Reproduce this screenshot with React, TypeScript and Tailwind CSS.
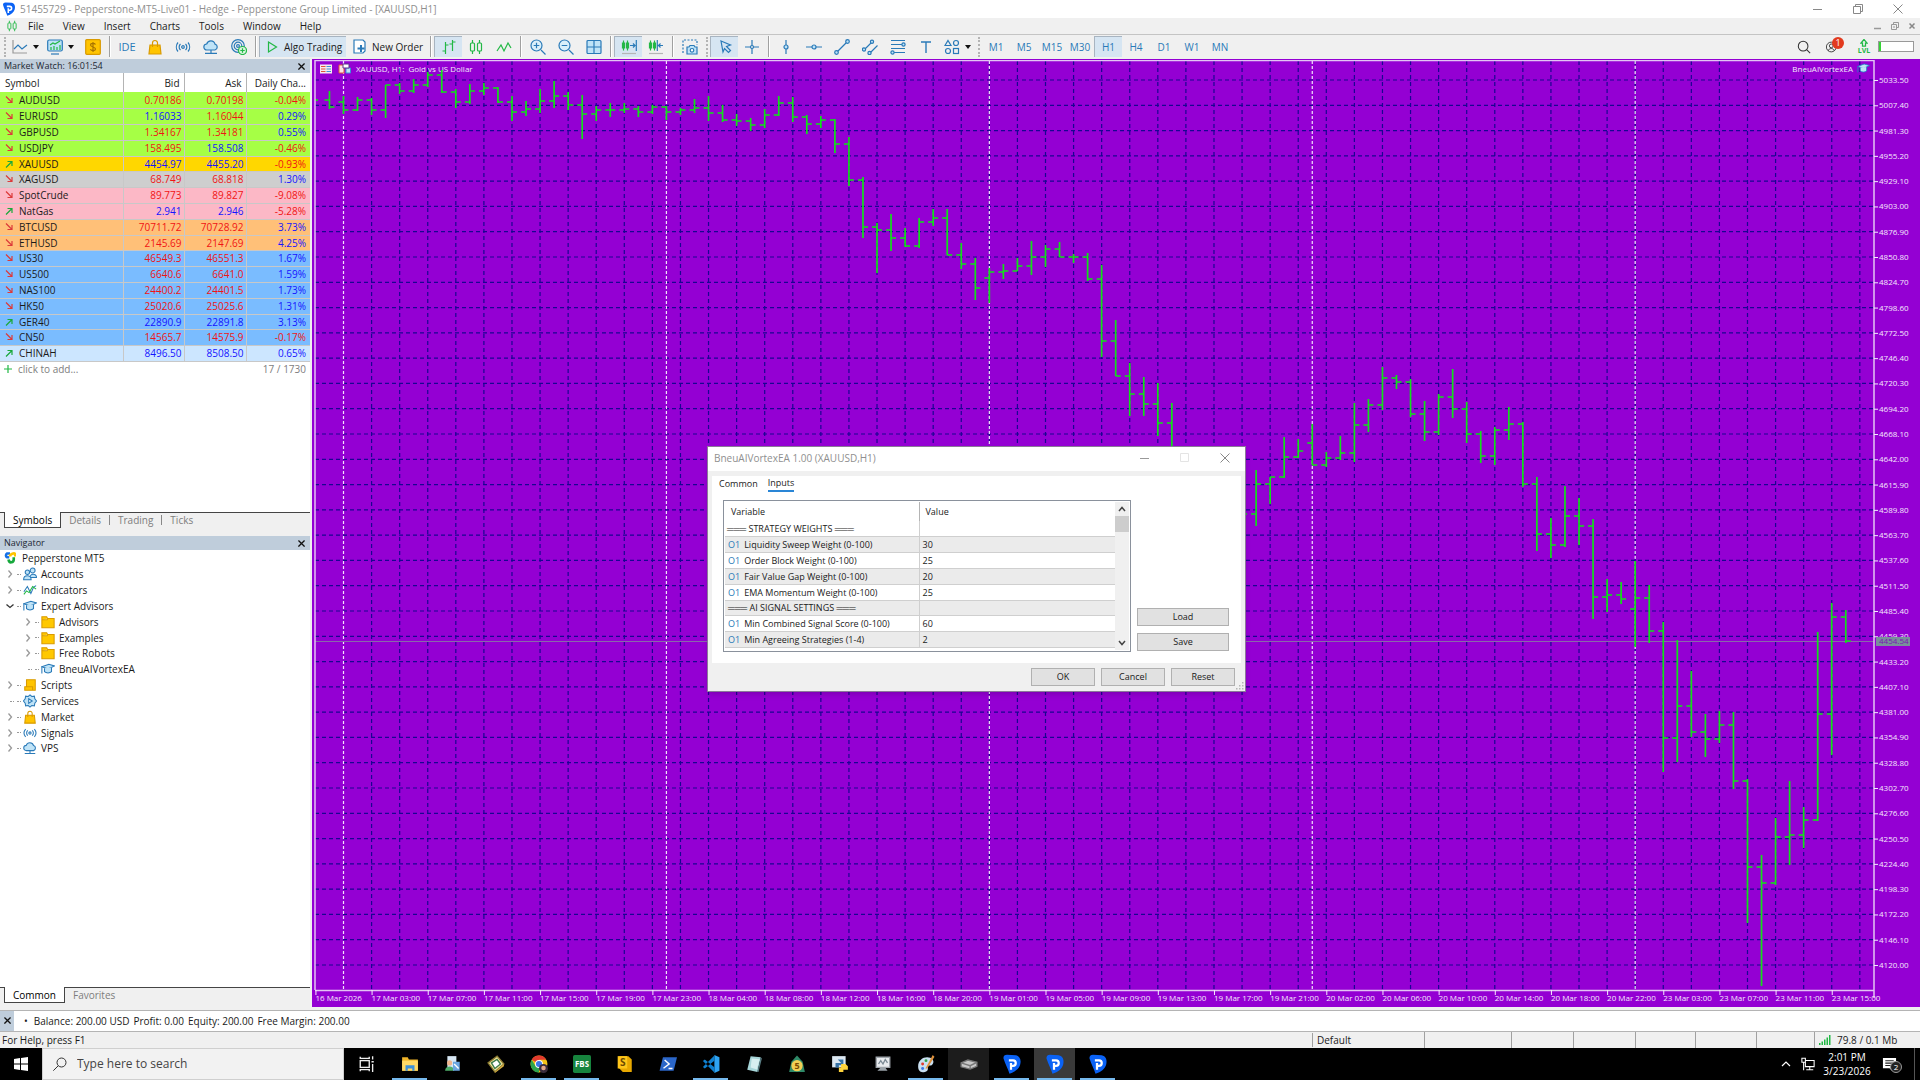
import { ReactNode } from 'react';

interface quoteProps {
    symbol: string;
    up: boolean;
    bid: string;
    ask: string;
    change: string;
    bidUp: boolean;
    askUp: boolean;
    color: string;
}

interface childrenProps {
    children?: ReactNode;
}

const BLUE = '#2a7ab8';
const SKY = '#bfe3f7';
const GREEN = '#22b845';

const GREEN_ROW = 'bg-[#a6ff45]';
const PINK_ROW = 'bg-[#fcb8c6]';
const ORANGE_ROW = 'bg-[#ffc078]';
const BLUE_ROW = 'bg-[#7abcff]';

const quotes: quoteProps[] = [
    { symbol: 'AUDUSD', up: false, bid: '0.70186', ask: '0.70198', change: '-0.04%', bidUp: false, askUp: false, color: GREEN_ROW },
    { symbol: 'EURUSD', up: false, bid: '1.16033', ask: '1.16044', change: '0.29%', bidUp: true, askUp: false, color: GREEN_ROW },
    { symbol: 'GBPUSD', up: false, bid: '1.34167', ask: '1.34181', change: '0.55%', bidUp: false, askUp: false, color: GREEN_ROW },
    { symbol: 'USDJPY', up: false, bid: '158.495', ask: '158.508', change: '-0.46%', bidUp: false, askUp: true, color: GREEN_ROW },
    { symbol: 'XAUUSD', up: true, bid: '4454.97', ask: '4455.20', change: '-0.93%', bidUp: true, askUp: true, color: 'bg-[#ffd700]' },
    { symbol: 'XAGUSD', up: false, bid: '68.749', ask: '68.818', change: '1.30%', bidUp: false, askUp: false, color: 'bg-[#cecece]' },
    { symbol: 'SpotCrude', up: false, bid: '89.773', ask: '89.827', change: '-9.08%', bidUp: false, askUp: false, color: PINK_ROW },
    { symbol: 'NatGas', up: true, bid: '2.941', ask: '2.946', change: '-5.28%', bidUp: true, askUp: true, color: PINK_ROW },
    { symbol: 'BTCUSD', up: false, bid: '70711.72', ask: '70728.92', change: '3.73%', bidUp: false, askUp: false, color: ORANGE_ROW },
    { symbol: 'ETHUSD', up: false, bid: '2145.69', ask: '2147.69', change: '4.25%', bidUp: false, askUp: false, color: ORANGE_ROW },
    { symbol: 'US30', up: false, bid: '46549.3', ask: '46551.3', change: '1.67%', bidUp: false, askUp: false, color: BLUE_ROW },
    { symbol: 'US500', up: false, bid: '6640.6', ask: '6641.0', change: '1.59%', bidUp: false, askUp: false, color: BLUE_ROW },
    { symbol: 'NAS100', up: false, bid: '24400.2', ask: '24401.5', change: '1.73%', bidUp: false, askUp: false, color: BLUE_ROW },
    { symbol: 'HK50', up: false, bid: '25020.6', ask: '25025.6', change: '1.31%', bidUp: false, askUp: false, color: BLUE_ROW },
    { symbol: 'GER40', up: true, bid: '22890.9', ask: '22891.8', change: '3.13%', bidUp: true, askUp: true, color: BLUE_ROW },
    { symbol: 'CN50', up: false, bid: '14565.7', ask: '14575.9', change: '-0.17%', bidUp: false, askUp: false, color: BLUE_ROW },
    { symbol: 'CHINAH', up: true, bid: '8496.50', ask: '8508.50', change: '0.65%', bidUp: true, askUp: true, color: 'bg-[#cce6ff]' },
];

// high, low, close and, where the bar opens on a gap, open
const bars: number[][] = [
    [31, 49, 47], [36, 54, 50, 42], [37, 51, 40], [38, 55, 50], [25, 58, 25], [23, 34, 31], [19, 33, 25], [12, 27, 15],
    [10, 33, 32], [29, 48, 42], [24, 44, 31], [23, 35, 28], [27, 43, 42], [36, 61, 52], [41, 56, 49], [29, 53, 41],
    [21, 48, 36], [32, 50, 45], [35, 79, 54], [46, 61, 50], [43, 57, 50], [43, 53, 49], [46, 57, 52], [45, 54, 47],
    [46, 60, 52], [48, 55, 50], [39, 53, 48], [36, 61, 53], [45, 62, 60], [54, 66, 61], [58, 71, 65], [49, 68, 55],
    [36, 56, 43], [37, 62, 57], [55, 74, 64], [56, 68, 60], [59, 93, 84], [77, 126, 120], [117, 178, 167], [163, 213, 170],
    [154, 191, 178], [168, 187, 186], [158, 188, 162], [149, 166, 158], [149, 195, 195], [183, 209, 204], [198, 240, 228], [208, 243, 212, 218],
    [204, 219, 211], [198, 211, 206], [181, 215, 197], [185, 207, 189], [182, 197, 197], [194, 203, 197], [193, 221, 219], [205, 297, 281],
    [260, 316, 316], [303, 356, 334], [317, 356, 344], [323, 376, 363], [343, 420, 410], [400, 450, 440], [430, 480, 470], [450, 490, 460],
    [450, 500, 480], [440, 490, 454], [410, 466, 424], [417, 444, 417], [377, 418, 397], [379, 398, 391], [364, 405, 405, 383], [392, 407, 398],
    [376, 400, 393], [343, 402, 365], [339, 372, 345], [307, 350, 318], [315, 329, 322], [319, 357, 354], [341, 381, 372], [334, 375, 337],
    [309, 358, 349], [342, 383, 374], [371, 403, 396], [367, 405, 370], [347, 380, 364], [362, 427, 424], [417, 491, 474], [458, 498, 485],
    [426, 487, 456], [438, 485, 466], [459, 559, 537], [519, 552, 535], [522, 544, 539], [501, 587, 538, 549], [525, 583, 571], [562, 712, 678],
    [580, 702, 646], [611, 677, 672], [654, 697, 679], [651, 683, 665], [652, 729, 721], [719, 863, 807], [795, 926, 823], [758, 825, 777],
    [721, 805, 775], [747, 788, 760], [572, 761, 654], [543, 695, 557], [550, 583, 581],
];

const days: [string, string[]][] = [
    ['17 Mar', ['03', '07', '11', '15', '19', '23']],
    ['18 Mar', ['04', '08', '12', '16', '20']],
    ['19 Mar', ['01', '05', '09', '13', '17', '21']],
    ['20 Mar', ['02', '06', '10', '14', '18', '22']],
    ['23 Mar', ['03', '07', '11', '15']],
];

const timeLabels = ['16 Mar 2026', ...days.flatMap(([day, hours]) => hours.map((hour) => `${day} ${hour}:00`))];

const inputs: [string, string][] = [
    ['Liquidity Sweep Weight (0-100)', '30'],
    ['Order Block Weight (0-100)', '25'],
    ['Fair Value Gap Weight (0-100)', '20'],
    ['EMA Momentum Weight (0-100)', '25'],
    ['═══ AI SIGNAL SETTINGS ═══', ''],
    ['Min Combined Signal Score (0-100)', '60'],
    ['Min Agreeing Strategies (1-4)', '2'],
];

function Icon({ children, size = 'size-4', box = '0 0 16 16' }: childrenProps & { size?: string; box?: string }) {
    return (
        <svg viewBox={box} className={`${size} shrink-0`} fill="none" stroke={BLUE} strokeWidth="1.2" aria-hidden="true">
            {children}
        </svg>
    );
}

function PepperLogo({ size }: { size: string }) {
    return (
        <Icon size={size}>
            <path d="M4 .6 11 .9C14 1.4 15.700 4.500 14.500 8.500 13.400 12 10.500 14.300 6 15.800 5 12 2.500 8 1.200 3.500 1 1.800 2 .6 4 .6Z" fill="#0a62f5" stroke="none" />
            <path d="M5.500 5H8.800a2.100 2.100 0 0 1 0 4.400H7M7.200 7.200V12.500" stroke="#fff" strokeWidth="1.800" />
        </Icon>
    );
}

function Cap() {
    return (
        <>
            <path d="M1 5.500 9 2.500l6.500 2L8 8Z" fill={SKY} />
            <path d="M4 7v4c2 2 6 2 8 0V6.200" fill={SKY} />
            <path d="M1 5.500V13" />
        </>
    );
}

function Cloud() {
    return (
        <>
            <path d="M4 11a3 3 0 0 1-.3-6A4.300 4.300 0 0 1 12 5.200 3 3 0 0 1 12 11Z" fill={SKY} />
            <path d="M8 11v3M2 14.300h12" />
        </>
    );
}

function Bag() {
    return (
        <>
            <path d="M3 6h10l1 9H2Z" fill="#ffc400" stroke="#d99a00" />
            <path d="M5.500 8V4a2.500 2.500 0 0 1 5 0v4" stroke="#d99a00" />
        </>
    );
}

function Waves() {
    return (
        <>
            <circle cx="8" cy="8" r="1.300" />
            <path d="M5.500 5a4 4 0 0 0 0 6M10.500 5a4 4 0 0 1 0 6M3 3.500a7 7 0 0 0 0 9M13 3.500a7 7 0 0 1 0 9" />
        </>
    );
}

function Candles() {
    return (
        <g stroke={GREEN}>
            <path d="M4.500 1v3M4.500 12v3M11.500 1v3M11.500 12v3" />
            <rect x="2.500" y="4" width="4" height="8" rx="1" />
            <rect x="9.500" y="4" width="4" height="8" rx="1" />
        </g>
    );
}

function Separator() {
    return <span className="mx-0.5 h-[21px] w-0.5 shrink-0 border-l border-[#a0a0a0] bg-white" />;
}

function Grip() {
    return <span className="mx-0.5 h-5 w-0.5 shrink-0 border-l-2 border-dotted border-[#b4b4b4]" />;
}

function Caret() {
    return (
        <span className="flex w-2 shrink-0 justify-center">
            <svg viewBox="0 0 6 4" className="h-1 w-1.5"><path d="M0 0h6L3 4Z" fill="#111" /></svg>
        </span>
    );
}

function Tool({ label, active, narrow, children }: childrenProps & { label: string; active?: boolean; narrow?: boolean }) {
    return (
        <button
            aria-label={label}
            className={`flex h-[21px] shrink-0 items-center justify-center ${narrow ? 'w-6' : 'w-7'} ${active ? 'border-t border-l border-[#a8b4c0] bg-[#d6e5f2]' : ''}`}
        >
            {children}
        </button>
    );
}

function Toolbar() {
    const frames = ['M1', 'M5', 'M15', 'M30', 'H1', 'H4', 'D1', 'W1', 'MN'];

    return (
        <div className="flex h-[23px] shrink-0 items-center overflow-hidden bg-[#f0f0f0] pl-0.5">
            <Grip />
            <Tool label="Chart type" narrow><Icon><path d="M1 1v13h14" stroke="#999" /><path d="m2 10 4-4 4 4 5-4" /></Icon></Tool>
            <Caret />
            <span className="w-[3px]" />
            <Tool label="Templates" narrow>
                <Icon><rect x=".7" y="1" width="14.600" height="11" rx="1.500" fill={SKY} /><path d="M4 15h8" /><path d="m3 6 3-2 2 1 5-3M4 11V8M7 11V7M10 11V8M13 11V6" stroke={GREEN} /></Icon>
            </Tool>
            <Caret />
            <span className="w-1" />
            <Tool label="Funds">
                <Icon><rect x=".7" y=".7" width="14.600" height="14.600" rx="1" fill="#ffc400" stroke="#d99a00" /><path d="M10.500 5.500c-1-1.500-5-1.500-5 .5s5 2 5 4-4 2.200-5.200.3M8 3v10" stroke="#a87400" /></Icon>
            </Tool>
            <Separator />
            <button className="w-7 shrink-0 text-[11px] text-[#2a7ab8]">IDE</button>
            <Tool label="Market"><Icon><Bag /></Icon></Tool>
            <Tool label="Signals"><Icon><Waves /></Icon></Tool>
            <Tool label="VPS"><Icon><Cloud /></Icon></Tool>
            <Tool label="Add account">
                <Icon><circle cx="7" cy="7" r="6.300" /><circle cx="7" cy="7" r="3.800" /><circle cx="7" cy="7" r="1.400" /><circle cx="11.500" cy="11.500" r="4" fill="#d9f5de" stroke={GREEN} /><path d="M11.500 9.300v4.400M9.300 11.500h4.400" stroke={GREEN} /></Icon>
            </Tool>
            <Separator />
            <button className="flex h-[21px] w-[87px] shrink-0 items-center gap-1 border-t border-l border-[#a8b4c0] bg-[#d6e5f2] pl-1 text-[10px] whitespace-nowrap">
                <Icon><path d="m4.500 3 8 5-8 5Z" stroke={GREEN} /></Icon>
                Algo Trading
            </button>
            <button className="flex h-[21px] w-[82px] shrink-0 items-center gap-1 pl-1.5 text-[10px] whitespace-nowrap">
                <Icon><path d="M2 1h9l2 2v9l-2 2H2Z" fill="#fff" /><path d="M9 6v7M5.500 9.500h7" strokeWidth="2" /></Icon>
                New Order
            </button>
            <Separator />
            <Tool label="Bar chart" active><Icon><path d="M4.500 3v12M1.500 12h3M4.500 6h3M11.500 1v11M8.500 5h3M11.500 3h3" stroke={GREEN} /></Icon></Tool>
            <Tool label="Candlesticks"><Icon><Candles /></Icon></Tool>
            <Tool label="Line chart"><Icon><path d="m1 12 4-6 3 6 4-8 3 5" stroke={GREEN} /></Icon></Tool>
            <Separator />
            <Tool label="Zoom in"><Icon><circle cx="6.500" cy="6.500" r="5.500" fill="#d9effa" /><path d="m11 11 4.500 4.500M6.500 3.700v5.600M3.700 6.500h5.600" /></Icon></Tool>
            <Tool label="Zoom out"><Icon><circle cx="6.500" cy="6.500" r="5.500" fill="#d9effa" /><path d="m11 11 4.500 4.500M3.700 6.500h5.600" /></Icon></Tool>
            <Tool label="Tile windows"><Icon><rect x="1" y="1.500" width="14" height="13" rx="1" fill={SKY} /><path d="M8 1.500v13M1 8h14" /></Icon></Tool>
            <Separator />
            <Tool label="Chart shift" active>
                <Icon><path d="M2.500 1.500v10M6.500 1.500v10" stroke={GREEN} /><path d="M1.500 4h2v5h-2ZM5.500 4h2v5h-2Z" stroke={GREEN} /><path d="M9 6.500h5M12 4.500l2 2-2 2M15.300 1v11" /><path d="M1 14.500h14" stroke="#b5b5b5" /></Icon>
            </Tool>
            <Tool label="Auto scroll">
                <Icon><path d="M2.500 1.500v10M6.500 1.500v10" stroke={GREEN} /><path d="M1.500 4h2v5h-2ZM5.500 4h2v5h-2Z" stroke={GREEN} /><path d="M10 6.500h5M12.500 4.500l-2 2 2 2M9.300 1v11" /><path d="M1 14.500h14" stroke="#b5b5b5" /></Icon>
            </Tool>
            <Separator />
            <Tool label="Screenshot"><Icon><path d="M1 14V1h14v5" strokeDasharray="2 1.500" /><path d="M5 8h2l1-1.500h4L13 8h2v7H5Z" fill={SKY} /><circle cx="10" cy="11.300" r="1.800" fill="#fff" /></Icon></Tool>
            <Grip />
            <Tool label="Cursor" active><Icon><path d="m4 2 9.500 4-4 1.500 4 4-2 2-4-4L6 13Z" /></Icon></Tool>
            <Tool label="Crosshair"><Icon><path d="M8 1v5.500M8 9.500V15M1 8h5.500M9.500 8H15" /><circle cx="8" cy="8" r="1.500" /></Icon></Tool>
            <Separator />
            <Tool label="Vertical line"><Icon><path d="M8 1v5M8 10v5" /><circle cx="8" cy="8" r="2" fill={SKY} /></Icon></Tool>
            <Tool label="Horizontal line"><Icon><path d="M0 8h6M10 8h6" /><circle cx="8" cy="8" r="2" fill={SKY} /></Icon></Tool>
            <Tool label="Trend line"><Icon><path d="m3 13 10-10" /><circle cx="2.500" cy="13.500" r="1.800" fill={SKY} /><circle cx="13.500" cy="2.500" r="1.800" fill={SKY} /></Icon></Tool>
            <Tool label="Channel"><Icon><path d="m2.500 10.500 7-7M7 15l8.500-8.500" /><circle cx="2" cy="10.500" r="1.600" fill={SKY} /><circle cx="10" cy="2.800" r="1.600" fill={SKY} /><circle cx="7.500" cy="14" r="1.600" fill={SKY} /></Icon></Tool>
            <Tool label="Fibonacci"><Icon><path d="M1 1.500h14M1 5.500h11M1 9.500h14M4 13.500h11" /><circle cx="13.500" cy="5.500" r="1.600" fill={SKY} /><circle cx="2.500" cy="13.500" r="1.600" fill={SKY} /></Icon></Tool>
            <Tool label="Text"><Icon><path d="M3 3h10M8 3v11" strokeWidth="1.400" /></Icon></Tool>
            <Tool label="Shapes" narrow><Icon><path d="M4 1.500 7 6.500H1Z" /><circle cx="12" cy="4" r="2.500" /><circle cx="4" cy="12" r="2.500" /><rect x="9.500" y="9.500" width="5" height="5" /></Icon></Tool>
            <Caret />
            <span className="w-1" />
            <Grip />
            {frames.map((frame) => (
                <button
                    key={frame}
                    className={`h-[21px] w-7 shrink-0 text-center text-[10px] text-[#2a7ab8] ${frame === 'H1' ? 'border-t border-l border-[#a8b4c0] bg-[#d6e5f2]' : ''}`}
                >
                    {frame}
                </button>
            ))}
            <div className="ml-auto flex shrink-0 items-center pr-1.5">
                <Tool label="Search"><Icon size="size-3.5"><circle cx="7" cy="7" r="5.500" stroke="#333" /><path d="m11 11 4 4" stroke="#333" /></Icon></Tool>
                <button className="relative flex w-7 justify-center" aria-label="Account">
                    <Icon size="size-3"><circle cx="7" cy="8" r="6.500" stroke="#333" /><circle cx="7" cy="6.500" r="2.500" stroke="#333" /><path d="M3 13c1-4 7-4 8 0" stroke="#333" /></Icon>
                    <span className="absolute -top-1 left-3.5 flex size-3 items-center justify-center rounded-full bg-[#e23a1e] text-[9px] text-white">1</span>
                </button>
                <button className="ml-1 flex w-7 flex-col items-center text-[7px] leading-[7px] font-bold text-[#22b845]">
                    <Icon size="size-2"><path d="M8 1 2 8h3v6h6V8h3Z" stroke={GREEN} strokeWidth="2.500" /></Icon>
                    LVL
                </button>
                <span className="h-[11px] w-9 border border-[#999] bg-white"><span className="block h-full w-0.5 bg-[#35d335]" /></span>
            </div>
        </div>
    );
}

function PanelTitle({ children }: childrenProps) {
    return (
        <div className="flex h-3.5 shrink-0 items-center justify-between bg-[#bfcddb] px-1 text-[9px] font-medium text-[#1c2733]">
            {children}
            <button className="pr-px" aria-label="Close panel">
                <svg viewBox="0 0 8 8" className="size-[7px]" stroke="#111" strokeWidth="1.500"><path d="m.5.5 7 7M7.500.5l-7 7" /></svg>
            </button>
        </div>
    );
}

function PanelTabs({ tabs }: { tabs: string[] }) {
    return (
        <div className="flex h-[18px] shrink-0 text-[10px] text-[#7d7d7d]">
            <span className="w-1 border-t border-[#444]" />
            <button className="h-4 border-x border-b border-[#444] bg-white px-2 leading-[14px] text-black">{tabs[0]}</button>
            <div className="flex flex-1 border-t border-[#444]">
                {tabs.slice(1).map((tab, index) => (
                    <button key={tab} className="flex h-3.5 items-center">
                        {index > 0 && <span className="h-2.5 border-l border-[#888]" />}
                        <span className="px-2">{tab}</span>
                    </button>
                ))}
            </div>
        </div>
    );
}

function MarketWatch() {
    return (
        <section className="flex h-[477px] shrink-0 flex-col">
            <PanelTitle>Market Watch: 16:01:54</PanelTitle>
            <div className="flex-1 bg-white">
                <table className="w-full table-fixed border-collapse text-[10px] leading-[14px]">
                    <thead>
                        <tr className="h-[19px]">
                            <th className="w-[123px] border-r border-[#b4b4b4] pl-[5px] text-left font-normal">Symbol</th>
                            <th className="w-[61px] border-r border-[#b4b4b4] pr-1 text-right font-normal">Bid</th>
                            <th className="w-[62px] border-r border-[#b4b4b4] pr-1 text-right font-normal">Ask</th>
                            <th className="pr-1 text-right font-normal whitespace-nowrap">Daily Cha...</th>
                        </tr>
                    </thead>
                    <tbody>
                        {quotes.map((quote) => (
                            <tr key={quote.symbol} className={`h-4 border-b border-[#c8c8c8] nth-[5n]:h-[15px] ${quote.color}`}>
                                <td className="border-r border-[#c8c8c8] p-0">
                                    <span className="flex items-center gap-1.5 pl-[5px]">
                                        <svg viewBox="0 0 8 8" className="size-2" fill="none" stroke={quote.up ? '#1ba83c' : '#dc3a3a'} strokeWidth="1.200">
                                            <path d={quote.up ? 'M1 7.500 7 1.500M2.500 1.500H7V6' : 'm1 .5 6 6M7 2v4.500H2.500'} />
                                        </svg>
                                        {quote.symbol}
                                    </span>
                                </td>
                                <td className={`border-r border-[#c8c8c8] py-0 pr-0.5 pl-0 text-right ${quote.bidUp ? 'text-[#1414ff]' : 'text-[#f01414]'}`}>{quote.bid}</td>
                                <td className={`border-r border-[#c8c8c8] py-0 pr-0.5 pl-0 text-right ${quote.askUp ? 'text-[#1414ff]' : 'text-[#f01414]'}`}>{quote.ask}</td>
                                <td className={`py-0 pr-1 pl-0 text-right ${quote.change.startsWith('-') ? 'text-[#f01414]' : 'text-[#1414ff]'}`}>{quote.change}</td>
                            </tr>
                        ))}
                    </tbody>
                </table>
                <div className="flex h-3.5 items-center gap-1.5 pr-1 pl-1 text-[10px] text-[#7d7d7d]">
                    <svg viewBox="0 0 8 8" className="size-2" stroke="#22b845" strokeWidth="1.200"><path d="M4 0v8M0 4h8" /></svg>
                    <span>click to add...</span>
                    <span className="ml-auto">17 / 1730</span>
                </div>
            </div>
            <PanelTabs tabs={['Symbols', 'Details', 'Trading', 'Ticks']} />
            <div className="h-1.5 bg-[#f0f0f0]" />
        </section>
    );
}

function TreeRow({ label, arrow, nested, children }: childrenProps & { label: string; arrow?: 'right' | 'down'; nested?: boolean }) {
    return (
        <li className={`flex h-4 items-center nth-[6n]:h-[15px] ${nested ? 'pl-6' : 'pl-1.5'}`}>
            <span className="flex w-2 justify-center">
                {arrow && (
                    <svg viewBox="0 0 8 8" className="size-2" fill="none" stroke={arrow === 'down' ? '#333' : '#999'} strokeWidth="1.300">
                        <path d={arrow === 'down' ? 'm.5 2.500 3.500 3 3.500-3' : 'm2.500.5 3 3.500-3 3.500'} />
                    </svg>
                )}
                {!arrow && <span className="ml-1 w-full border-t border-dotted border-[#999]" />}
            </span>
            <span className="mr-0.5 ml-[3px] w-1 border-t border-dotted border-[#999]" />
            <Icon size="size-3.5">{children}</Icon>
            <span className="pl-1">{label}</span>
        </li>
    );
}

function Folder() {
    return <path d="M1 14.500V2h5.500l1 2H15v10.500ZM1 5.500h6l1-1.500" fill="#ffc800" stroke="#d99a00" />;
}

function Navigator() {
    return (
        <section className="flex min-h-0 flex-1 flex-col">
            <PanelTitle>Navigator</PanelTitle>
            <ul className="flex-1 bg-white text-[10px]">
                <li className="flex h-4 items-center gap-1.5 pl-1">
                    <Icon size="size-3">
                        <path d="M8 2H4a3 3 0 0 0 0 5h3" stroke="#1470e6" strokeWidth="3.500" />
                        <path d="M8 6c0-4 6-5 7-3v3" stroke="#ffc400" strokeWidth="3.500" />
                        <path d="M6 10c1 6 7 4 7 0V7" stroke="#16a83c" strokeWidth="3.500" />
                    </Icon>
                    Pepperstone MT5
                </li>
                <TreeRow label="Accounts" arrow="right">
                    <circle cx="11" cy="4" r="2.800" fill={SKY} /><path d="M8 12c0-5 7-5 7.500 0Z" fill={SKY} /><circle cx="5" cy="6" r="2.500" fill={SKY} /><path d="M.7 14.500c0-6 8.600-6 8.600 0Z" fill={SKY} />
                </TreeRow>
                <TreeRow label="Indicators" arrow="right">
                    <path d="m1 10 4-6 4 8 3-7 3-2" /><path d="m1 13 3-4 3 2 4-7 4 3" stroke={GREEN} />
                </TreeRow>
                <TreeRow label="Expert Advisors" arrow="down"><Cap /></TreeRow>
                <TreeRow label="Advisors" arrow="right" nested><Folder /></TreeRow>
                <TreeRow label="Examples" arrow="right" nested><Folder /></TreeRow>
                <TreeRow label="Free Robots" arrow="right" nested><Folder /></TreeRow>
                <TreeRow label="BneuAIVortexEA" nested><Cap /></TreeRow>
                <TreeRow label="Scripts" arrow="right"><path d="M4 2h10v12H2v-4h2ZM4 10h7v4" fill="#ffc400" stroke="#d99a00" /></TreeRow>
                <TreeRow label="Services">
                    <path d="m8 1 2 1.800 3-.3.5 3L15.500 8l-2 2.500-.5 3-3-.3L8 15l-2-1.800-3 .3-.5-3L.5 8l2-2.500.5-3 3 .3Z" fill={SKY} /><path d="m6.500 5.500 4 2.500-4 2.500Z" fill="#fff" />
                </TreeRow>
                <TreeRow label="Market" arrow="right"><Bag /></TreeRow>
                <TreeRow label="Signals" arrow="right"><Waves /></TreeRow>
                <TreeRow label="VPS" arrow="right"><Cloud /></TreeRow>
            </ul>
            <PanelTabs tabs={['Common', 'Favorites']} />
            <div className="h-[5px] bg-[#f0f0f0]" />
        </section>
    );
}

function Chart() {
    const pitch = 14.04;
    const barX = (index: number) => 31.5 + (index - 1) * pitch;
    const levels = Array.from({ length: 36 }, (_, index) => index);
    const columns = Array.from({ length: 54 }, (_, index) => index);

    return (
        <svg viewBox="0 0 1608 947" preserveAspectRatio="xMinYMin slice" className="block size-full bg-[#9400d3]" fontSize="8">
            <g stroke="#1a0592" strokeWidth="1.200" strokeDasharray="4 3">
                {levels.map((level) => (
                    <line key={level} x1="3" x2="1562" y1={20 + level * 25.286} y2={20 + level * 25.286} />
                ))}
                {columns.map((column) => (
                    <line key={column} x1={barX(3 + column * 2)} x2={barX(3 + column * 2)} y1="1" y2="930" />
                ))}
            </g>
            <g stroke="#f3e3fb" strokeWidth="1.200" strokeDasharray="3 2">
                {[1, 24, 47, 70, 93].map((bar) => (
                    <line key={bar} x1={barX(bar)} x2={barX(bar)} y1="1" y2="930" />
                ))}
            </g>
            <line x1="3" x2="1562" y1="581.500" y2="581.500" stroke="#8a68aa" />
            <g fill="#f5e9fc">
                <text x="44" y="12" xmlSpace="preserve">XAUUSD, H1:  Gold vs US Dollar</text>
                <text x="1541" y="12" textAnchor="end">BneuAIVortexEA</text>
            </g>
            <g stroke="#12e01a" strokeWidth="1.700">
                <line x1="3" x2="6" y1="40" y2="40" />
                {bars.map(([high, low, close, open], index) => {
                    const x = barX(index);
                    const start = open ?? bars[index - 1]?.[2] ?? 40;
                    return <path key={index} d={`M${x} ${high}V${low}M${x - 5} ${start}H${x}M${x} ${close}H${x + 5}`} />;
                })}
            </g>
            <path d="M3 930V.5H1562V938M3 930.500H1562" fill="none" stroke="#e3c4f4" strokeWidth="1.500" />
            <g fill="#f5e9fc">
                {levels.map((level) => (
                    <g key={level}>
                        <rect x="1562" y={20 + level * 25.286} width="4" height="1" />
                        <text x="1567" y={23 + level * 25.286}>{(5033.5 - level * 26.1).toFixed(2)}</text>
                    </g>
                ))}
                {timeLabels.map((label, index) => (
                    <g key={label}>
                        <rect x={barX(index * 4 - 1)} y="930" width="1" height="5" />
                        <text x={barX(index * 4 - 1)} y="941">{label}</text>
                    </g>
                ))}
            </g>
            <rect x="1564" y="577" width="34" height="9" fill="#78909a" />
            <text x="1567" y="584" fill="#7b12b5">4454.54</text>
            <g>
                <rect x="8" y="4.500" width="12" height="9" fill="#f6e8ee" />
                <path d="M9 6.500h4.500M9 9h4.500M9 11.500h4.500" stroke="#e0503c" />
                <path d="M14.500 6.500H19M14.500 9H19M14.500 11.500H19" stroke="#3c90d8" />
                <path d="M27 5h5v8h-5Z" fill="#fbe3e3" stroke="#e0503c" />
                <path d="M34 8h4.500v5H34Z" fill="#bfe3f7" stroke="#3c90d8" />
                <path d="M31 4h6v4h-6Z" fill="#fff" stroke="#5b3a8c" />
            </g>
            <g transform="translate(1545 2) scale(.8)" fill="none" stroke="#1d86c4"><Cap /></g>
        </svg>
    );
}

function Dialog() {
    const button = 'h-[18px] border border-[#b0b0b0] bg-[#e1e1e1] text-center text-[9px] leading-4';

    return (
        <div role="dialog" aria-label="BneuAIVortexEA 1.00" className="absolute top-[387px] left-[395px] flex h-[246px] w-[539px] flex-col border border-[#8b7a99] bg-[#f0f0f0] shadow-md">
            <div className="flex h-6 shrink-0 items-center bg-white pr-[15px] pb-0.5 pl-1.5 text-[10px] text-[#8f8f8f]">
                <span className="flex-1">BneuAIVortexEA 1.00 (XAUUSD,H1)</span>
                <button className="w-10" aria-label="Minimize"><svg viewBox="0 0 10 10" className="size-2.5" stroke="#999"><path d="M0 5.500h9" /></svg></button>
                <button className="w-10" aria-label="Maximize"><svg viewBox="0 0 10 10" className="size-2.5" fill="none" stroke="#e4e4e4"><path d="M.5.5h8v8h-8Z" /></svg></button>
                <button aria-label="Close"><svg viewBox="0 0 10 10" className="size-2.5" stroke="#888"><path d="m.5.5 9 9M9.500.5l-9 9" /></svg></button>
            </div>
            <div className="mx-1 mt-[5px] flex min-h-0 flex-1 flex-col bg-white">
                <div className="flex h-6 shrink-0 gap-2.5 pl-[7px] text-[9px] leading-[14px]">
                    <button className="h-4">Common</button>
                    <button className="h-4 border-b-2 border-[#2a86d6]">Inputs</button>
                </div>
                <div className="flex flex-1 gap-1.5 pr-3 pb-3 pl-[11px]">
                    <div className="flex h-[152px] flex-1 overflow-hidden border border-[#8a919c] p-px">
                        <div className="h-full flex-1 overflow-hidden">
                            <table className="w-full table-fixed border-collapse text-[9px] leading-[13px]">
                                <thead>
                                    <tr className="h-[19px]">
                                        <th className="w-[194px] border-r border-[#b4b4b4] pl-1.5 text-left font-normal">Variable</th>
                                        <th className="pl-1.5 text-left font-normal">Value</th>
                                    </tr>
                                </thead>
                                <tbody>
                                    <tr className="h-[15px] border-b border-[#cfcfcf]">
                                        <td className="border-r border-[#cfcfcf] py-0 pl-0.5">═══ STRATEGY WEIGHTS ═══</td>
                                        <td />
                                    </tr>
                                    {inputs.map(([name, value]) => (
                                        <tr key={name} className="h-4 border-b border-[#cfcfcf] odd:bg-white even:bg-[#ebebeb] nth-[6]:h-[15px]">
                                            <td className="border-r border-[#cfcfcf] py-0 pr-0 pl-[3px] whitespace-nowrap">
                                                {value && <span className="mr-1 font-medium text-[#2a7ab8]">O1</span>}
                                                {name}
                                            </td>
                                            <td className="py-0 pr-0 pl-[3px]">{value}</td>
                                        </tr>
                                    ))}
                                </tbody>
                            </table>
                        </div>
                        <div className="flex w-3.5 shrink-0 flex-col items-center bg-[#f0f0f0] py-1">
                            <svg viewBox="0 0 8 6" className="h-1.5 w-2 shrink-0" fill="none" stroke="#444" strokeWidth="1.500"><path d="m1 5 3-3.500L7 5" /></svg>
                            <span className="mt-1 h-4 w-3.5 bg-[#cdcdcd]" />
                            <svg viewBox="0 0 8 6" className="mt-auto h-1.5 w-2 shrink-0" fill="none" stroke="#444" strokeWidth="1.500"><path d="m1 1 3 3.500L7 1" /></svg>
                        </div>
                    </div>
                    <div className="flex w-[92px] flex-col justify-end gap-[7px] pb-px">
                        <button className={button}>Load</button>
                        <button className={button}>Save</button>
                    </div>
                </div>
            </div>
            <div className="relative flex h-7 shrink-0 justify-end gap-1.5 pt-[5px] pr-2.5">
                <button className={`w-16 ${button}`}>OK</button>
                <button className={`w-16 ${button}`}>Cancel</button>
                <button className={`w-16 ${button}`}>Reset</button>
                <svg viewBox="0 0 8 8" className="absolute right-px bottom-px size-2" fill="#b5b5b5"><path d="M6 0h1.500v1.500H6ZM6 3h1.500v1.500H6ZM3 3h1.500v1.500H3ZM6 6h1.500v1.500H6ZM3 6h1.500v1.500H3ZM0 6h1.500v1.500H0Z" /></svg>
            </div>
        </div>
    );
}

interface appProps {
    name: string;
    open?: boolean;
    state?: string;
    icon: ReactNode;
}

const apps: appProps[] = [
    { name: 'Task view', icon: <g stroke="#eee"><rect x="2" y="5" width="8" height="6" /><path d="M2 1.500v1.500h8V1.500M2 14.500V13h8v1.500M13 1v3M13 8v7M12 6h2" /></g> },
    { name: 'File Explorer', open: true, icon: <g stroke="none"><path d="M1 2h5l1 2h8v10H1Z" fill="#f0b429" /><path d="M1 5h14v9H1Z" fill="#ffd966" /><path d="M4 9h8v5h-2v-2H6v2H4Z" fill="#3c90d8" /></g> },
    { name: 'Contacts', icon: <g stroke="none"><path d="M3 1h8v11H3Z" fill="#d8e8f5" /><circle cx="5" cy="7" r="2.300" fill="#f0b48c" /><path d="M1 14c0-5 8-5 8 0Z" fill="#4fae6a" /><path d="M8 6h6v8H8Z" fill="#6ba6e0" /><path d="m9 8 4 4" stroke="#fff" /></g> },
    { name: 'Notes', icon: <g><path d="m1 7 8-6 6 7-8 7Z" fill="#f2e6a0" stroke="#8a7a30" /><path d="m4 7 5-3 3 4-5 4Z" fill="#fff" stroke="#3d7a4a" /><path d="m7 15 8-7v2l-8 6Z" fill="#d8b040" stroke="none" /></g> },
    { name: 'Chrome', open: true, icon: <g stroke="none"><circle cx="8" cy="8" r="7.500" fill="#f2c218" /><path d="M8 8 1.500 4.200A7.500 7.500 0 0 1 14.500 4.300H8Z" fill="#e23a2e" /><path d="M8 8v7.500A7.500 7.500 0 0 1 1.500 4.200L5 10Z" fill="#2da44e" /><circle cx="8" cy="8" r="3.500" fill="#fff" /><circle cx="8" cy="8" r="2.700" fill="#3b78e7" /><circle cx="12" cy="12" r="4" fill="#3a2c3c" /><circle cx="12" cy="11.500" r="2" fill="#e0a88c" /></g> },
    { name: 'FBS', open: true, icon: <g stroke="none"><rect width="16" height="16" rx="1.500" fill="#17843e" /><text x="8" y="11" textAnchor="middle" fontSize="7" fontWeight="700" fill="#fff">FBS</text></g> },
    { name: 'Scripts', icon: <g stroke="none"><path d="M3 1h8l3 3v11H6l-3-3Z" fill="#e8a800" /><path d="M1.500 1H10v11H1.500Z" fill="#ffc61a" /><text x="6" y="10" textAnchor="middle" fontSize="9" fontWeight="700" fill="#6b4a00">S</text></g> },
    { name: 'PowerShell', icon: <g stroke="none"><path d="M3.500 2H16l-3 12H.5Z" fill="#2b66c8" /><path d="m5 4.500 4 3.500-5 3.800M8.500 12H12" stroke="#fff" strokeWidth="1.300" fill="none" /></g> },
    { name: 'VS Code', open: true, icon: <g stroke="none"><path d="m11 0 4.500 2v12L11 16Z" fill="#2ea3f2" /><path d="M11 .5v4.700L2.500 12 .8 10.600ZM11 15.500v-4.700L2.500 4 .8 5.400Z" fill="#0f80d0" /></g> },
    { name: 'Notepad', icon: <g stroke="none"><path d="m5 1 9 1-3 13-9-2Z" fill="#a6d5d8" /><path d="m6 3 7 .8-2.500 9L5 11Z" fill="#d7eff0" /><path d="m14 2 1 1-3 12h-1Z" fill="#5b7f86" /></g> },
    { name: 'Money', icon: <g stroke="none"><path d="M8 .5 13 6l2 9H1l2-9Z" fill="#2f8a68" /><circle cx="8" cy="9.500" r="5" fill="#f2cf55" /><text x="8" y="12.500" textAnchor="middle" fontSize="8" fontWeight="700" fill="#7a4a00">5</text></g> },
    { name: 'Python', icon: <g stroke="none"><path d="M1 1h12v10H1Z" fill="#dce8f2" /><path d="M6 4h5v5H7v2H4V7h5" fill="#3572a5" /><path d="M9 8h4l2 2v3h-4v2H7v-4h2Z" fill="#ffd43b" /></g> },
    { name: 'Monitor', icon: <g><path d="M2 2h12v9H2Z" fill="#e8ebee" stroke="#a0a6ac" /><path d="m4 8 2-3 2 3 2-4 2 3" stroke="#7b8a94" /><path d="m6 11-3 3h9l-2-3Z" fill="#9aa2a8" stroke="none" /></g> },
    { name: 'Paint', open: true, icon: <g stroke="none"><path d="M1 10c0-5 4-8 8-8s7 3 5 6-3 0-4 2 1 4-3 5-6-1-6-5Z" fill="#c9dff0" /><circle cx="5" cy="8" r="1.300" fill="#e23a2e" /><circle cx="8" cy="5" r="1.300" fill="#2da44e" /><circle cx="5" cy="12" r="1.300" fill="#3b78e7" /><path d="m14 0 1.500 1.500L9 12H7.500Z" fill="#e0923c" /></g> },
    { name: 'Device', state: 'bg-[#1c1c1c]', icon: <g><path d="m1 7 6-2.500 8 2V10l-6 2.500-8-2Z" fill="#c8c8c8" stroke="#777" /><path d="m1 7 8 2.500 6-3M9 9.500v3" stroke="#777" /></g> },
    { name: 'MetaTrader 1', open: true, icon: null },
    { name: 'MetaTrader 2', open: true, state: 'bg-[#3a3a3a]', icon: null },
    { name: 'MetaTrader 3', open: true, icon: null },
];

function Taskbar() {
    return (
        <footer className="flex h-8 shrink-0 items-stretch bg-black text-white">
            <button className="flex w-[42px] items-center justify-center" aria-label="Start">
                <svg viewBox="0 0 14 14" className="size-3.5" fill="#fff"><path d="M0 2 6 1v5.500H0ZM7 .9 14 0v6.500H7ZM0 7.500h6V13l-6-1ZM7 7.500h7V14l-7-.9Z" /></svg>
            </button>
            <label className="flex w-[302px] items-center gap-2.5 border border-[#cfcfcf] bg-[#f2f2f2] pl-2.5">
                <svg viewBox="0 0 14 14" className="size-3.5" fill="none" stroke="#333"><circle cx="8.500" cy="5.500" r="4.500" /><path d="m5.300 8.700-5 5" /></svg>
                <input type="text" aria-label="Search" placeholder="Type here to search" className="min-w-0 flex-1 bg-transparent text-[12px] outline-none placeholder:text-[#444]" />
            </label>
            <div className="flex pl-px">
                {apps.map((app) => (
                    <button key={app.name} aria-label={app.name} className="flex w-[43px] justify-center px-px">
                        <span className={`flex h-full w-full items-center justify-center ${app.state ?? ''}`}>
                            <span className={`flex h-full w-[35px] items-center justify-center border-b-2 pt-0.5 ${app.open ? 'border-[#76b9ed]' : 'border-transparent'}`}>
                                {app.icon ? <Icon size="size-[18px]">{app.icon}</Icon> : <PepperLogo size="size-5" />}
                            </span>
                        </span>
                    </button>
                ))}
            </div>
            <div className="ml-auto flex items-center">
                <button aria-label="Hidden icons" className="w-5"><svg viewBox="0 0 10 6" className="mx-auto h-1.5 w-2.5" fill="none" stroke="#fff" strokeWidth="1.200"><path d="m1 5 4-4 4 4" /></svg></button>
                <button aria-label="Network" className="flex w-6 justify-center"><Icon size="size-3.5"><g stroke="#fff"><path d="M5 4h10v7H5ZM10 11v3M6 14.500h8M1 1.500h4V6H1ZM3 6v9" /></g></Icon></button>
                <div className="w-[54px] text-center text-[10px] leading-[14px]">
                    <p>2:01 PM</p>
                    <p>3/23/2026</p>
                </div>
                <button aria-label="Notifications" className="relative flex w-[30px] justify-center">
                    <Icon size="size-[15px]"><path d="M1 1h14v11h-4v3l-3-3H1Z" fill="#fff" stroke="none" /><path d="M3.500 4h9M3.500 6.500h9M3.500 9h9" stroke="#222" /></Icon>
                    <span className="absolute top-1 right-0.5 flex size-3 items-center justify-center rounded-full border border-[#999] bg-[#222] text-[8px]">2</span>
                </button>
                <span className="ml-2.5 h-full w-1.5 border-l border-[#555]" />
            </div>
        </footer>
    );
}

export default function App() {
    const menus = ['File', 'View', 'Insert', 'Charts', 'Tools', 'Window', 'Help'];

    return (
        <main className="flex h-screen flex-col overflow-hidden bg-[#f0f0f0] font-['Open_Sans','Noto_Sans',sans-serif] text-[10px] leading-[14px] text-[#1a1a1a]">
            <header className="flex h-[18px] shrink-0 items-center bg-white pr-[17px] pl-0.5">
                <PepperLogo size="size-3.5" />
                <h1 className="flex-1 pl-1 text-[10px] text-[#8f8f8f]">51455729 - Pepperstone-MT5-Live01 - Hedge - Pepperstone Group Limited - [XAUUSD,H1]</h1>
                <div className="flex items-center gap-[30px]">
                    <button aria-label="Minimize"><svg viewBox="0 0 10 10" className="size-2.5" stroke="#888"><path d="M0 5.500h9" /></svg></button>
                    <button aria-label="Restore"><svg viewBox="0 0 10 10" className="size-2.5" fill="none" stroke="#888"><path d="M.5 2.500h7v7h-7ZM2.500 2.500v-2h7v7h-2" /></svg></button>
                    <button aria-label="Close"><svg viewBox="0 0 10 10" className="size-2.5" stroke="#888"><path d="m.5.5 9 9M9.500.5l-9 9" /></svg></button>
                </div>
            </header>
            <nav className="flex h-[17px] shrink-0 items-center border-b border-[#c4c4c4] pr-1 pl-1.5">
                <Icon size="size-3"><Candles /></Icon>
                <div className="flex flex-1 gap-[19px] pl-2.5">
                    {menus.map((menu) => (
                        <button key={menu}>{menu}</button>
                    ))}
                </div>
                <div className="flex items-center gap-[9px]">
                    <svg viewBox="0 0 8 8" className="size-2" stroke="#999" strokeWidth="1.500"><path d="M0 6.500h7" /></svg>
                    <svg viewBox="0 0 8 8" className="size-2" fill="none" stroke="#999"><path d="M.5 2.500h5v5h-5ZM2.500 2V.5h5v5H6M2 5h2" /></svg>
                    <svg viewBox="0 0 8 8" className="size-2" stroke="#888" strokeWidth="1.500"><path d="m1.500 1.500 5 5M6.500 1.500l-5 5" /></svg>
                </div>
            </nav>
            <Toolbar />
            <div className="flex min-h-0 flex-1 pt-px">
                <aside className="flex w-[310px] shrink-0 flex-col">
                    <MarketWatch />
                    <Navigator />
                </aside>
                <div className="relative ml-0.5 min-w-0 flex-1 pb-[3px]">
                    <div className="h-full border-t border-[#9400d3]"><Chart /></div>
                    <Dialog />
                </div>
            </div>
            <section className="flex h-[22px] shrink-0 border-y border-[#b4b4b4] bg-white">
                <button className="flex w-3.5 justify-center bg-[#bfcddb] pt-1.5" aria-label="Close toolbox">
                    <svg viewBox="0 0 8 8" className="size-[7px]" stroke="#111" strokeWidth="1.500"><path d="m.5.5 7 7M7.500.5l-7 7" /></svg>
                </button>
                <p className="flex items-center gap-1 pl-2.5 text-[10px]">
                    <span className="pr-0.5">•</span>
                    <span>Balance: 200.00 USD</span>
                    <span>Profit: 0.00</span>
                    <span>Equity: 200.00</span>
                    <span>Free Margin: 200.00</span>
                </p>
            </section>
            <div className="flex h-4 shrink-0 items-center">
                <span className="flex-1 pl-0.5">For Help, press F1</span>
                <span className="w-28 border-l border-[#a0a0a0] pl-1">Default</span>
                <span className="h-full w-[87px] border-l border-[#a0a0a0]" />
                <span className="h-full w-[62px] border-l border-[#a0a0a0]" />
                <span className="h-full w-[62px] border-l border-[#a0a0a0]" />
                <span className="h-full w-[60px] border-l border-[#a0a0a0]" />
                <span className="h-full w-[61px] border-l border-[#a0a0a0]" />
                <span className="h-full w-[58px] border-l border-[#a0a0a0]" />
                <span className="flex h-full w-[106px] items-center gap-1.5 border-l border-[#a0a0a0] pl-1">
                    <svg viewBox="0 0 12 10" className="h-2.5 w-3" fill="#22b845"><path d="M0 8h1.500v2H0ZM2.500 6.500H4V10H2.500ZM5 4.500h1.500V10H5ZM7.500 2.500H9V10H7.500ZM10 0h1.500v10H10Z" /></svg>
                    79.8 / 0.1 Mb
                </span>
            </div>
            <Taskbar />
        </main>
    );
}
